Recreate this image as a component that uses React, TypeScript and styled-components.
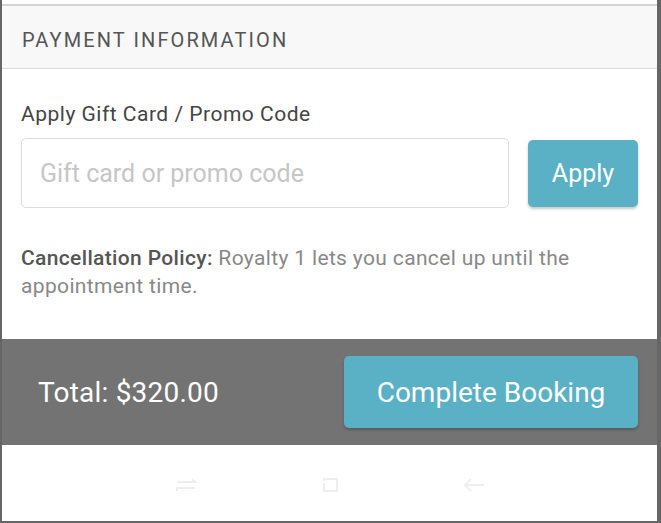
import styled, { createGlobalStyle } from "styled-components";

const GlobalStyle = createGlobalStyle`
    html, body {
        margin: 0;
        padding: 0;
        height: 100%;
    }
    body {
        font-family: Roboto, "Liberation Sans", sans-serif;
        background: #666666;
    }
    #root {
        height: 100%;
    }
`;

const Frame = styled.div`
    height: 100%;
    box-sizing: border-box;
    padding: 0 4px 2px 2px;
    background: #666666;
`;

const Screen = styled.div`
    height: 100%;
    display: flex;
    flex-direction: column;
    background: #ffffff;
`;

const TopStrip = styled.div`
    height: 4px;
    background: #ffffff;
    border-bottom: 2px solid #d4d4d4;
`;

const SectionHeader = styled.header`
    height: 63px;
    box-sizing: border-box;
    display: flex;
    align-items: center;
    padding: 5px 0 0 20px;
    background: #f8f8f8;
    border-bottom: 1px solid #dadada;
    color: #555555;
    font-size: 20px;
    letter-spacing: 2.1px;
    text-transform: uppercase;
`;

const Body = styled.section`
    flex: 1;
    padding: 32px 19px 0 19px;
`;

const Label = styled.label`
    display: block;
    font-size: 21px;
    letter-spacing: 0.5px;
    line-height: 26px;
    color: #444444;
    margin-bottom: 11px;
`;

const PromoRow = styled.div`
    display: flex;
    align-items: center;
    gap: 19px;
`;

const PromoInput = styled.input`
    flex: 1;
    height: 70px;
    box-sizing: border-box;
    border: 1px solid #dcdcdc;
    border-radius: 5px;
    padding: 0 18px;
    font-family: inherit;
    font-size: 25px;
    color: #444444;
    outline: none;

    &::placeholder {
        color: #c6c6c6;
    }
`;

const ActionButton = styled.button<{ $size?: "sm" | "lg" }>`
    border: none;
    border-radius: 5px;
    background: #5ab0c4;
    color: #ffffff;
    font-family: inherit;
    box-shadow: 0 2px 3px rgba(0, 0, 0, 0.22);
    cursor: pointer;
    width: ${(p) => (p.$size === "lg" ? "294px" : "110px")};
    height: ${(p) => (p.$size === "lg" ? "72px" : "67px")};
    font-size: ${(p) => (p.$size === "lg" ? "28px" : "25px")};
`;

const Policy = styled.p`
    margin: 36px 0 0 0;
    font-size: 21px;
    letter-spacing: 0.35px;
    line-height: 28px;
    color: #888888;

    strong {
        font-weight: 500;
        color: #555555;
    }
`;

const Footer = styled.div`
    height: 106px;
    display: flex;
    align-items: center;
    justify-content: space-between;
    padding: 0 19px 0 36px;
    background: #737373;
`;

const Total = styled.span`
    color: #ffffff;
    font-size: 28px;
    letter-spacing: 0.2px;
`;

const NavBar = styled.nav`
    height: 76px;
    display: flex;
    align-items: center;
    justify-content: center;
    gap: 116px;
    padding-top: 4px;
    box-sizing: border-box;
`;

const NavIcon = styled.svg`
    width: 28px;
    height: 28px;
    stroke: #eeeeee;
    stroke-width: 2;
    fill: none;
`;

export function App() {
    return (
        <>
            <GlobalStyle />
            <Frame>
                <Screen>
                    <TopStrip />
                    <SectionHeader>Payment Information</SectionHeader>

                    <Body>
                        <Label htmlFor="promo">Apply Gift Card / Promo Code</Label>
                        <PromoRow>
                            <PromoInput id="promo" placeholder="Gift card or promo code" />
                            <ActionButton>Apply</ActionButton>
                        </PromoRow>

                        <Policy>
                            <strong>Cancellation Policy:</strong> Royalty 1 lets you cancel up until the
                            appointment time.
                        </Policy>
                    </Body>

                    <Footer>
                        <Total>Total: $320.00</Total>
                        <ActionButton $size="lg">Complete Booking</ActionButton>
                    </Footer>

                    <NavBar>
                        <NavIcon viewBox="0 0 28 28">
                            <path d="M5 11h18l-3-3M23 17H5l0 3" />
                        </NavIcon>
                        <NavIcon viewBox="0 0 28 28">
                            <path d="M8 10V8h13v12h-2M20 20H8v-8" />
                        </NavIcon>
                        <NavIcon viewBox="0 0 28 28">
                            <path d="M24 14H5M11 8l-6 6 6 6" />
                        </NavIcon>
                    </NavBar>
                </Screen>
            </Frame>
        </>
    );
}

export default App;
